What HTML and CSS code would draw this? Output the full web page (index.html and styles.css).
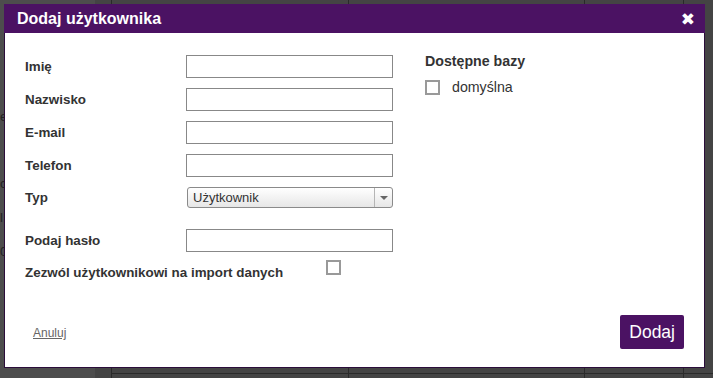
FILE: index.html
```html
<!DOCTYPE html>
<html>
	<head>
		<meta charset="utf-8" />
		<title>Dodaj użytkownika</title>
		<link rel="stylesheet" href="styles.css">
	</head>
	<body>
		<!-- tlo strony pod oknem -->
		<div class="backdrop">
			<span class="bg-txt t1">e</span>
			<span class="bg-txt t2">c</span>
			<span class="bg-txt t3">l</span>
			<span class="bg-txt t4">0</span>
		</div>

		<div class="modal">
			<div class="modal-head">
				<h2>Dodaj użytkownika</h2>
				<span class="close">&#10006;</span>
			</div>
			<div class="modal-body">
				<div class="form">
					<label>Imię</label>
					<input type="text" class="field">
					<label>Nazwisko</label>
					<input type="text" class="field">
					<label>E-mail</label>
					<input type="text" class="field">
					<label>Telefon</label>
					<input type="text" class="field">
					<label>Typ</label>
					<div class="select">
						<span class="select-val">Użytkownik</span>
						<span class="select-arrow"></span>
					</div>
					<label class="pass">Podaj hasło</label>
					<input type="password" class="field pass">
					<label class="wide">Zezwól użytkownikowi na import danych</label>
					<span class="check"></span>
				</div>
				<div class="bases">
					<h3>Dostępne bazy</h3>
					<div class="base-row">
						<span class="check"></span>
						<span>domyślna</span>
					</div>
				</div>
			</div>
			<div class="modal-foot">
				<a href="#" class="cancel">Anuluj</a>
				<button class="btn">Dodaj</button>
			</div>
		</div>
	</body>
</html>
```

FILE: styles.css
```css
body {
	margin: 0;
	width: 713px;
	height: 378px;
	overflow: hidden;
	background-color: #474747;
	font-family: "Liberation Sans", Arial, sans-serif;
	position: relative;
}
.backdrop {
	position: absolute;
	left: 0;
	top: 0;
	width: 713px;
	height: 378px;
	background:
		linear-gradient(#2a2a2a, #2a2a2a) 111px 0 / 1px 378px no-repeat,
		linear-gradient(#2a2a2a, #2a2a2a) 348px 0 / 1px 378px no-repeat,
		linear-gradient(#2a2a2a, #2a2a2a) 584px 0 / 1px 378px no-repeat,
		linear-gradient(#2a2a2a, #2a2a2a) 683px 0 / 1px 378px no-repeat,
		linear-gradient(#2a2a2a, #2a2a2a) 111px 373px / 602px 1px no-repeat,
		linear-gradient(#4d4d4d, #4d4d4d) 0 0 / 95px 378px no-repeat,
		#444;
}
.bg-txt {
	position: absolute;
	left: 0;
	font-size: 13px;
	color: #222;
}
.t1 { top: 109px; }
.t2 { top: 176px; }
.t3 { top: 210px; }
.t4 { top: 244px; }

.modal {
	position: absolute;
	left: 4px;
	top: 4px;
	width: 699px;
	height: 363px;
	background: #fff;
	border: 1px solid #2b0d3a;
	border-top: none;
	display: flex;
	flex-direction: column;
}
.modal-head {
	height: 29px;
	background-color: #4b1263;
	display: flex;
	align-items: center;
	justify-content: space-between;
	padding: 0 10px 0 13px;
	margin: 0 -1px;
}
.modal-head h2 {
	margin: 0;
	color: #fff;
	font-size: 16px;
	font-weight: bold;
}
.close {
	color: #fff;
	font-size: 17px;
	font-family: "DejaVu Sans", sans-serif;
	line-height: 1;
	margin-top: 1px;
}
.modal-body {
	display: flex;
	padding: 22px 0 0 20px;
	flex: 1;
}
.form {
	display: grid;
	grid-template-columns: 161px 207px;
	grid-auto-rows: min-content;
	row-gap: 10px;
	align-items: center;
	width: 400px;
}
.form label {
	font-size: 13.4px;
	font-weight: bold;
	color: #333;
}
.form label.wide {
	white-space: nowrap;
	margin-top: 3px;
}
.field {
	box-sizing: border-box;
	height: 23px;
	margin: 0;
	border: 1px solid #888;
	border-radius: 0;
	padding: 2px 4px;
	font-size: 13px;
}
.pass {
	margin-top: 11px;
}
.select {
	box-sizing: border-box;
	height: 21px;
	margin-left: 1px;
	border: 1px solid #8a8a8a;
	border-radius: 3px;
	background: linear-gradient(#ffffff, #e6e6e6);
	display: flex;
	align-items: center;
	font-size: 13px;
	color: #333;
}
.select-val {
	flex: 1;
	padding-left: 5px;
}
.select-arrow {
	width: 17px;
	height: 100%;
	border-left: 1px solid #b5b5b5;
	position: relative;
}
.select-arrow::after {
	content: "";
	position: absolute;
	left: 5px;
	top: 8px;
	border-left: 4px solid transparent;
	border-right: 4px solid transparent;
	border-top: 4px solid #666;
}
.check {
	display: inline-block;
	box-sizing: border-box;
	width: 15px;
	height: 15px;
	border: 2px solid #999;
	background: #fff;
}
.form .check {
	justify-self: start;
	margin-left: 140px;
	margin-top: -8px;
}
.bases {
	padding-left: 0;
}
.bases h3 {
	margin: -2px 0 0;
	font-size: 14.2px;
	font-weight: bold;
	color: #333;
}
.base-row {
	display: flex;
	align-items: center;
	gap: 12px;
	margin-top: 10px;
	font-size: 14.2px;
	color: #333;
}
.modal-foot {
	display: flex;
	justify-content: space-between;
	align-items: center;
	padding: 0 19px 18px 28px;
}
.cancel {
	font-size: 12px;
	color: #666;
	text-decoration: underline;
	margin-top: 2px;
}
.btn {
	height: 34px;
	padding: 0 9px;
	margin-right: 1px;
	background-color: #4b1263;
	color: #fff;
	border: none;
	border-radius: 2px;
	font-family: "Liberation Sans", Arial, sans-serif;
	font-size: 17.5px;
}
```
